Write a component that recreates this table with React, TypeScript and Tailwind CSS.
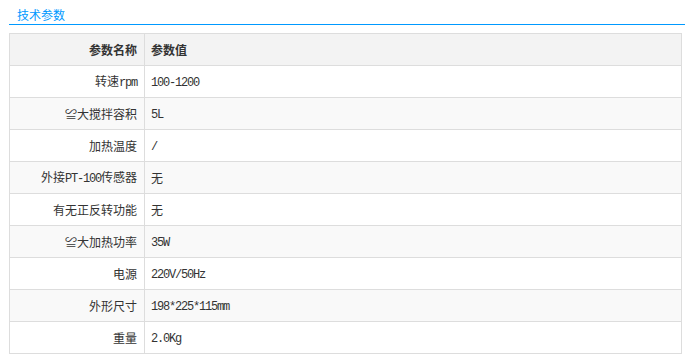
const rows: [string, string][] = [
  ["转速rpm", "100-1200"],
  ["≌大搅拌容积", "5L"],
  ["加热温度", "/"],
  ["外接PT-100传感器", "无"],
  ["有无正反转功能", "无"],
  ["≌大加热功率", "35W"],
  ["电源", "220V/50Hz"],
  ["外形尺寸", "198*225*115mm"],
  ["重量", "2.0Kg"],
];

// latin bits render in a narrow mono like the old bitmap 宋体
function Mixed({ text }: { text: string }) {
  const parts = text.match(/[\x20-\x7e]+|[^\x20-\x7e]+/g) ?? [];
  return (
    <>
      {parts.map((p, i) =>
        /^[\x20-\x7e]+$/.test(p) ? (
          <span key={i} className="font-['Liberation_Mono',monospace] text-[12px] tracking-[-1.2px]">
            {p}
          </span>
        ) : (
          <span key={i}>{p}</span>
        )
      )}
    </>
  );
}

export default function App() {
  return (
    <div className="w-[694px] h-[361px] bg-white font-['Noto_Sans_CJK_SC',sans-serif] text-[12px] text-[#333]">
      <div className="pt-[6px] px-[9px]">
        <div className="pl-[8px] h-[18px] leading-[17px] text-[12px] text-[#0099ff]">技术参数</div>
        <div className="h-px bg-[#0099ff]" />
        <table className="mt-[8px] w-[673px] border-collapse">
          <tbody>
            <tr className="bg-[#f3f3f3] h-[32px]">
              <th className="w-[135px] border border-[#dddddd] text-right pr-[7px] font-bold">参数名称</th>
              <th className="border border-[#dddddd] text-left pl-[6px] font-bold">参数值</th>
            </tr>
            {rows.map(([k, v], i) => (
              <tr key={k} className={`h-[32px] ${i % 2 === 1 ? "bg-[#f9f9f9]" : "bg-white"}`}>
                <td className="border border-[#dddddd] text-right pr-[7px] whitespace-nowrap">
                  <Mixed text={k} />
                </td>
                <td className="border border-[#dddddd] text-left pl-[6px]">
                  <Mixed text={v} />
                </td>
              </tr>
            ))}
          </tbody>
        </table>
      </div>
    </div>
  );
}
